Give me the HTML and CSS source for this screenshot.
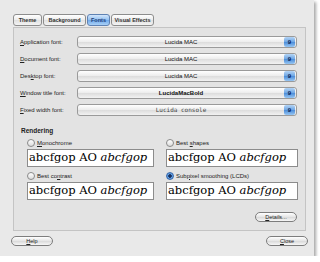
FILE: index.html
```html
<!DOCTYPE html>
<html lang="en">
<head>
    <meta charset="UTF-8">
    <title>Appearance Preferences - Fonts</title>
    <link rel="stylesheet" href="styles.css">
</head>
<body>
    <div class="window">
        <div class="tabs">
            <span class="tab tab-theme">Theme</span>
            <span class="tab tab-bg">Background</span>
            <span class="tab tab-fonts active">Fonts</span>
            <span class="tab tab-fx">Visual Effects</span>
        </div>

        <div class="panel">
            <div class="font-row">
                <span class="label"><u>A</u>pplication font:</span>
                <div class="combo"><span class="name">Lucida MAC</span><span class="size">9</span></div>
            </div>
            <div class="font-row">
                <span class="label"><u>D</u>ocument font:</span>
                <div class="combo"><span class="name">Lucida MAC</span><span class="size">9</span></div>
            </div>
            <div class="font-row">
                <span class="label">Des<u>k</u>top font:</span>
                <div class="combo"><span class="name">Lucida MAC</span><span class="size">9</span></div>
            </div>
            <div class="font-row">
                <span class="label"><u>W</u>indow title font:</span>
                <div class="combo"><span class="name bold">LucidaMacBold</span><span class="size">9</span></div>
            </div>
            <div class="font-row">
                <span class="label"><u>F</u>ixed width font:</span>
                <div class="combo"><span class="name mono">Lucida console</span><span class="size">9</span></div>
            </div>

            <h4 class="section-title">Rendering</h4>
            <div class="render-grid">
                <div class="render-item">
                    <label class="radio"><span class="dot"></span><span><u>M</u>onochrome</span></label>
                    <div class="preview">abcfgop AO <i>abcfgop</i></div>
                </div>
                <div class="render-item">
                    <label class="radio"><span class="dot"></span><span>Best <u>s</u>hapes</span></label>
                    <div class="preview">abcfgop AO <i>abcfgop</i></div>
                </div>
                <div class="render-item">
                    <label class="radio"><span class="dot"></span><span>Best co<u>n</u>trast</span></label>
                    <div class="preview">abcfgop AO <i>abcfgop</i></div>
                </div>
                <div class="render-item">
                    <label class="radio"><span class="dot checked"></span><span>Sub<u>p</u>ixel smoothing (LCDs)</span></label>
                    <div class="preview">abcfgop AO <i>abcfgop</i></div>
                </div>
            </div>

            <div class="details-row">
                <button class="pill"><u>D</u>etails...</button>
            </div>
        </div>

        <div class="footer">
            <button class="pill"><u>H</u>elp</button>
            <button class="pill"><u>C</u>lose</button>
        </div>
    </div>
</body>
</html>
```

FILE: styles.css
```css
* {
    margin: 0;
    padding: 0;
    box-sizing: border-box;
}

body {
    background: #ffffff;
    font-family: "Liberation Sans", "DejaVu Sans", sans-serif;
    font-size: 6px;
    color: #1a1a1a;
}

u {
    text-decoration: underline;
    text-underline-offset: 1px;
}

.window {
    width: 314px;
    height: 256px;
    background: #e9e9e9;
    box-shadow: 2px 2px 3px rgba(0, 0, 0, 0.35);
    padding-top: 14px;
}

.tabs {
    display: flex;
    gap: 1px;
    margin-left: 13px;
    height: 12px;
}

.tab {
    display: flex;
    align-items: center;
    justify-content: center;
    height: 12px;
    border: 1px solid #8d8d8d;
    border-radius: 3px;
    background: linear-gradient(#ffffff, #ececec 50%, #e0e0e0 51%, #f4f4f4);
    font-weight: bold;
    font-size: 5.5px;
    white-space: nowrap;
    color: #333;
}

.tab-theme { width: 29px; }
.tab-bg { width: 43px; }
.tab-fonts { width: 23px; }
.tab-fx { width: 43px; }

.tab.active {
    background: linear-gradient(#d3e6fb, #92c0f1 50%, #6fa8ea 51%, #a9d1f7);
    border-color: #5f82b3;
    color: #1c3d78;
}

.panel {
    margin: 1px 8px 0 13px;
    height: 204px;
    border: 1px solid #c4c4c4;
    background: #e3e3e3;
    padding: 5px 8px 0 6px;
}

.font-row {
    display: flex;
    align-items: center;
    height: 17px;
}

.label {
    width: 57px;
    white-space: nowrap;
    font-size: 6px;
    color: #222;
}

.combo {
    flex: 1;
    height: 12px;
    border: 1px solid #9a9a9a;
    border-radius: 3px;
    background: linear-gradient(#ffffff, #ececec 50%, #dcdcdc 51%, #f2f2f2);
    display: flex;
    align-items: center;
}

.combo .name {
    flex: 1;
    text-align: center;
    font-size: 6px;
    color: #111;
}

.combo .name.bold {
    font-weight: bold;
}

.combo .name.mono {
    font-family: "DejaVu Sans Mono", monospace;
    color: #444;
}

.combo .size {
    width: 11px;
    height: 10px;
    margin-right: 1px;
    border-radius: 2px;
    background: linear-gradient(#b4d4f5, #6ca5e4 50%, #4a8bd8 51%, #97c6f3);
    color: #0a2050;
    font-weight: bold;
    font-size: 6px;
    display: flex;
    align-items: center;
    justify-content: center;
}

.section-title {
    font-size: 6.5px;
    font-weight: bold;
    margin: 9px 0 3px 1px;
    color: #222;
}

.render-grid {
    display: grid;
    grid-template-columns: 127px 132px;
    column-gap: 12px;
    row-gap: 3px;
    padding-left: 7px;
}

.radio {
    display: flex;
    align-items: center;
    gap: 2px;
    height: 11px;
    font-size: 6px;
    color: #222;
}

.dot {
    width: 8px;
    height: 8px;
    border-radius: 50%;
    border: 1px solid #8a8a8a;
    background: linear-gradient(#ffffff, #dcdcdc);
}

.dot.checked {
    border-color: #3c6aa8;
    background: radial-gradient(circle, #17305e 0 1.5px, #6aa7ea 2px, #3d7fd0 4px);
}

.preview {
    height: 18px;
    margin-top: 1px;
    background: #ffffff;
    border: 1px solid #8c8c8c;
    font-family: "DejaVu Serif", "Liberation Serif", serif;
    font-size: 11.5px;
    line-height: 15px;
    padding-left: 1px;
    white-space: nowrap;
    overflow: hidden;
    color: #000;
}

.details-row {
    display: flex;
    justify-content: flex-end;
    margin-top: 12px;
}

.pill {
    width: 42px;
    height: 10px;
    border: 1px solid #7d7d7d;
    border-radius: 6px;
    background: linear-gradient(#ffffff, #e4e4e4 50%, #d9d9d9 51%, #f7f7f7);
    font-family: "Liberation Sans", sans-serif;
    font-size: 5.5px;
    color: #222;
}

.footer {
    display: flex;
    justify-content: space-between;
    padding: 5px 6px 0 11px;
}
```
